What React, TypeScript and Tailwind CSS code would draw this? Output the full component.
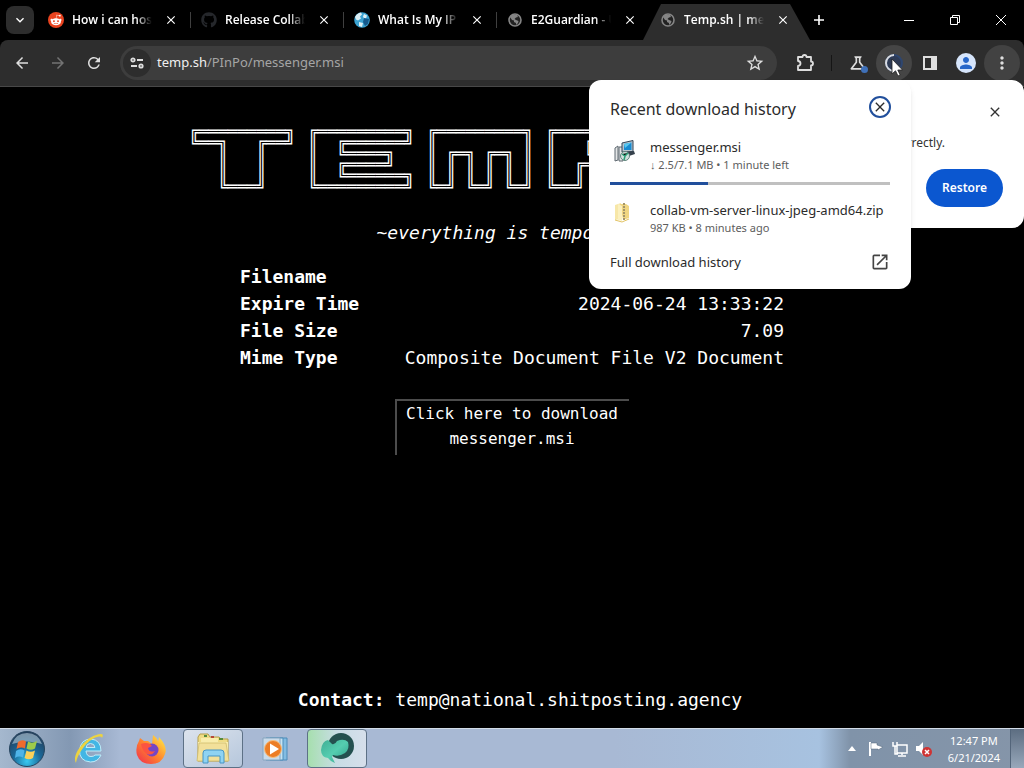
import React from 'react';
import {
  MdArrowBack,
  MdArrowForward,
  MdClose,
  MdKeyboardArrowDown,
  MdMoreVert,
  MdOpenInNew,
  MdOutlineScience,
  MdPerson,
  MdRefresh,
  MdStarBorder,
} from 'react-icons/md';
import { FaGithub, FaRedditAlien } from 'react-icons/fa';

const letters = [
  `╔═════════╗
╚══╗   ╔══╝
   ║   ║
   ║   ║
   ║   ║
   ╚═══╝   `,
  `╔═════════╗
║  ╔══════╝
║  ╚════╗
║  ╔════╝
║  ╚══════╗
╚═════════╝`,
  `╔═════════╗
║         ║
║ ╔═╗ ╔═╗ ║
║ ║ ║ ║ ║ ║
║ ║ ║ ║ ║ ║
╚═╝ ╚═╝ ╚═╝`,
  `╔═════════╗
║   ╔═╗   ║
║   ╚═╝   ║
║  ╔══════╝
║  ║
╚══╝       `,
];

const details = [
  ['Filename', 'messenger.msi'],
  ['Expire Time', '2024-06-24 13:33:22'],
  ['File Size', '7.09'],
  ['Mime Type', 'Composite Document File V2 Document'],
];

function GlobeIcon() {
  return (
    <svg viewBox="0 0 16 16" className="h-4 w-4">
      <circle cx="8" cy="8" r="6" fill="#222" stroke="#858585" strokeWidth="1.6" />
      <path d="M3 5l2 3 2 .5V10l2 1v2l2-2 .5-2L9 8 7.500 7 9 5.500 11 5 10 3 7 2.500 5 3z" fill="#858585" />
    </svg>
  );
}

function EarthIcon() {
  return (
    <svg viewBox="0 0 16 16" className="h-4 w-4">
      <circle cx="8" cy="8" r="7.800" fill="#3ba3d2" />
      <path d="M1 5q2-4 6-4.500l1 2-2 2 1 2-3 2-2-1zM10 2l3 1.500-1 3-2 0-1-2zM5 10l4 1-1 4-3-1z" fill="#dceff4" />
      <path d="M10 6l5 1-1 5-3 2-2-4z" fill="#155a8d" />
    </svg>
  );
}

function RedditIcon() {
  return (
    <span className="flex h-4 w-4 items-center justify-center rounded-full bg-[#e8431f]">
      <FaRedditAlien className="h-3 w-3 text-white" />
    </span>
  );
}

const tabs = [
  { title: 'How i can host a', icon: <RedditIcon /> },
  { title: 'Release CollabVM', icon: <FaGithub className="h-4 w-4 text-[#25272b]" /> },
  { title: 'What Is My IP Address', icon: <EarthIcon /> },
  { title: 'E2Guardian - UCP', icon: <GlobeIcon /> },
  { title: 'Temp.sh | messenger', icon: <GlobeIcon />, active: true },
];

function TabStrip() {
  return (
    <div className="flex h-10 items-center bg-black text-white">
      <button aria-label="Search tabs" className="mr-1 ml-1.5 flex h-7 w-7 shrink-0 items-center justify-center rounded-lg bg-[#2d2d2d]">
        <MdKeyboardArrowDown className="h-4 w-4" />
      </button>
      {tabs.map((tab, i) => (
        <div key={tab.title} className="relative flex h-10 w-[153px] items-center pl-2.5">
          {tab.active && (
            <div className="absolute -inset-x-[7px] top-1 bottom-0 bg-[#2d2d2d] [clip-path:polygon(0_100%,18px_0,calc(100%-20px)_0,100%_100%)]" />
          )}
          {i < 3 && <div className="absolute right-0 h-4 w-px bg-[#3f3f3f]" />}
          <span className="relative shrink-0">{tab.icon}</span>
          <span className="relative ml-2 w-20 overflow-hidden font-['Open_Sans','Noto_Sans',sans-serif] text-xs font-semibold whitespace-nowrap [mask-image:linear-gradient(to_right,#000_80%,transparent)]">
            {tab.title}
          </span>
          <button aria-label={'Close ' + tab.title} className="relative ml-3">
            <MdClose className="h-3.5 w-3.5" />
          </button>
        </div>
      ))}
      <button aria-label="New tab" className="ml-0.5 flex h-7 w-7 items-center justify-center">
        <svg viewBox="0 0 12 12" className="h-3 w-3" stroke="#fff" strokeWidth="1.600">
          <path d="M6 1v10M1 6h10" />
        </svg>
      </button>
      <div className="ml-auto flex h-10">
        <button aria-label="Minimize" className="flex w-[46px] items-center justify-center">
          <svg viewBox="0 0 12 12" className="h-3 w-3" stroke="#fff">
            <path d="M1 6.500h10" />
          </svg>
        </button>
        <button aria-label="Restore window" className="flex w-[46px] items-center justify-center">
          <svg viewBox="0 0 12 12" className="h-3 w-3" fill="none" stroke="#fff">
            <path d="M1.500 3.500h7v7h-7zM3.500 3.500v-2h7v7h-2" />
          </svg>
        </button>
        <button aria-label="Close window" className="flex w-[46px] items-center justify-center">
          <svg viewBox="0 0 12 12" className="h-3 w-3" stroke="#fff">
            <path d="M1 1l10 10M11 1L1 11" />
          </svg>
        </button>
      </div>
    </div>
  );
}

function Toolbar() {
  const iconButton = 'flex h-9 w-9 shrink-0 items-center justify-center';
  return (
    <div className="relative bg-black">
      <div className="flex h-[46px] items-center rounded-t-lg bg-[#2d2d2d] px-1 text-[#dedede]">
        <button aria-label="Back" className={iconButton}><MdArrowBack className="h-[18px] w-[18px]" /></button>
        <button aria-label="Forward" className={iconButton}><MdArrowForward className="h-[18px] w-[18px] text-[#737373]" /></button>
        <button aria-label="Reload" className={iconButton}><MdRefresh className="h-[18px] w-[18px]" /></button>
        <div className="mr-2.5 ml-2 flex h-[34px] min-w-0 flex-1 items-center rounded-full bg-[#3d3d3d] pr-3 pl-[3px]">
          <button aria-label="Site information" className="mr-1.5 flex h-7 w-7 shrink-0 items-center justify-center rounded-full bg-[#2d2d2d]">
            <svg viewBox="0 0 14 12" className="h-3 w-3.5" fill="none" stroke="#dedede" strokeWidth="1.800">
              <circle cx="3" cy="3" r="1.700" />
              <path d="M7 3h6M1 9h6" />
              <circle cx="11" cy="9" r="1.700" />
            </svg>
          </button>
          <a href="https://temp.sh/PInPo/messenger.msi" className="flex-1 text-[13px] text-[#a5a5a5]">
            <span className="text-[#f0f0f0]">temp.sh</span>/PInPo/messenger.msi
          </a>
          <button aria-label="Bookmark this tab"><MdStarBorder className="h-5 w-5" /></button>
        </div>
        <button aria-label="Extensions" className={iconButton}>
          <svg viewBox="0 0 20 20" className="h-5 w-5" fill="none" stroke="#dedede" strokeWidth="1.800" strokeLinejoin="round">
            <path d="M3 4h4.500q0-2 2-2t2 2H16v4.500q2 0 2 2t-2 2V17H3v-4q2.500-.3 2.500-2.500T3 8z" />
          </svg>
        </button>
        <div className="mx-2 h-4 w-px bg-[#151515]" />
        <button aria-label="Labs" className={iconButton + ' relative'}>
          <MdOutlineScience className="h-5 w-5" />
          <span className="absolute right-2 bottom-2 h-[7px] w-[7px] rounded-full bg-[#3f70b8]" />
        </button>
        <button aria-label="Downloads" className={iconButton + ' rounded-full bg-[#454545]'}>
          <svg viewBox="0 0 20 20" className="h-5 w-5" fill="none" strokeWidth="2">
            <circle cx="10" cy="10" r="8" fill="#2e3b55" stroke="#2e4670" />
            <path d="M10 18A8 8 0 0 1 10 2" stroke="#d9dce2" />
          </svg>
        </button>
        <button aria-label="Side panel" className={iconButton}>
          <svg viewBox="0 0 16 16" className="h-4 w-4">
            <path d="M2 2h12v12H2z" fill="none" stroke="#dedede" strokeWidth="2" />
            <path d="M9 2h5v12H9z" fill="#dedede" />
          </svg>
        </button>
        <button aria-label="Profile" className={iconButton}>
          <span className="flex h-5 w-5 items-center justify-center rounded-full bg-[#d6e5fb]">
            <MdPerson className="h-[18px] w-[18px] text-[#2666c9]" />
          </span>
        </button>
        <button aria-label="Menu" className={iconButton + ' rounded-full bg-[#424242]'}><MdMoreVert className="h-5 w-5" /></button>
      </div>
      <div className="h-px bg-[#484848]" />
      <RestoreBubble />
      <DownloadBubble />
      {/* Mouse pointer */}
      <svg viewBox="0 0 12 19" className="absolute top-[18px] right-[121px] h-[19px] w-3">
        <path d="M1 1v15l3.500-3.200L7 18l2.200-1-2.400-5H11.500z" fill="#fff" stroke="#222" strokeWidth=".8" />
      </svg>
    </div>
  );
}

function RestoreBubble() {
  return (
    <section aria-label="Restore pages" className="absolute top-10 right-0 flex h-[148px] w-80 flex-col items-end rounded-xl bg-white px-[21px] py-6 text-[#333] shadow-lg">
      <button aria-label="Dismiss"><MdClose className="h-4 w-4" /></button>
      <p className="mt-[13px] mr-[58px] text-xs leading-5 whitespace-nowrap">Chrome didn't shut down correctly.</p>
      <button className="mt-4 h-[38px] shrink-0 rounded-full bg-[#0b57d0] px-4 text-xs font-semibold text-white">
        Restore
      </button>
    </section>
  );
}

function MsiIcon() {
  return (
    <svg viewBox="0 0 22 22" className="h-[22px] w-[22px]">
      <path d="M1 8l3-2v14l-3 1zM5 7h4v14H5z" fill="#e3e5e6" stroke="#5e6870" />
      <path d="M8 3l11-2.500v11L8 12z" fill="#b9c4ce" stroke="#304456" />
      <path d="M10 4l7.500-1.500v7.500L10 10z" fill="#188bd1" />
      <path d="M10 4l7.500-1.500L11 8z" fill="#59c8ef" />
      <path d="M12 12l8-1 1 3-6 2z" fill="#35404b" />
      <circle cx="11" cy="16" r="4.500" fill="#cfe0dc" stroke="#61837c" />
      <path d="M8 14l3 2 3-3M11 16l-1 4" stroke="#2b9e76" strokeWidth="1.500" />
    </svg>
  );
}

function ZipIcon() {
  return (
    <svg viewBox="0 0 20 22" className="h-[22px] w-5">
      <path d="M3 4l6-2v16l-6 1z" fill="#f7e7a8" />
      <path d="M8 3h6l3 2v12l-6 2z" fill="#f0d682" />
      <path d="M6 3l4 2v15l-4-1z" fill="#fbf0bf" />
      <path d="M12 2v17" stroke="#a4966a" strokeWidth="2" strokeDasharray="2 1" />
      <path d="M3 19l7 2 7-3" stroke="#e2c364" fill="none" />
    </svg>
  );
}

function DownloadBubble() {
  return (
    <section className="absolute top-10 right-[113px] h-[209px] w-[322px] rounded-xl bg-white px-5 pt-4 text-[#2b2b2b] shadow-md">
      <div className="flex h-[22px] items-start justify-between pl-px">
        <h2 className="pt-0.5 text-base leading-[22px]">Recent download history</h2>
        <button aria-label="Close" className="flex h-[22px] w-[22px] items-center justify-center rounded-full border-2 border-[#214f9c]">
          <MdClose className="h-4 w-4" />
        </button>
      </div>
      <div className="mt-5 flex gap-4 pl-px">
        <div className="w-6 pt-0.5 pl-1"><MsiIcon /></div>
        <div>
          <p className="text-[13px] leading-[18px]">messenger.msi</p>
          <p className="text-[11px] leading-[18px] text-[#5d5d5d]">↓ 2.5/7.1 MB • 1 minute left</p>
        </div>
      </div>
      <div className="mx-px mt-2 h-[3px] bg-[#c0c0c0]">
        <div className="h-[3px] w-[35%] bg-[#214f9c]" />
      </div>
      <div className="mt-4 flex gap-4 pl-px">
        <div className="w-6 pl-0.5"><ZipIcon /></div>
        <div className="whitespace-nowrap">
          <p className="text-[13px] leading-[18px]">collab-vm-server-linux-jpeg-amd64.zip</p>
          <p className="text-[11px] leading-[18px] text-[#5d5d5d]">987 KB • 8 minutes ago</p>
        </div>
      </div>
      <a href="#history" className="mx-px mt-[13px] flex items-center justify-between text-[13px] leading-6">
        Full download history
        <MdOpenInNew className="h-5 w-5 text-[#444]" />
      </a>
    </section>
  );
}

function TempPage() {
  return (
    <main className="flex flex-1 flex-col items-center bg-black pt-[39px] font-['DejaVu_Sans_Mono','Liberation_Mono',monospace] text-lg text-white">
      <div aria-label="Temp" className="flex w-full max-w-[650px] gap-[13px] pl-0.5">
        {letters.map((letter) => (
          <pre key={letter} className="font-['DejaVu_Sans_Mono',monospace] text-base leading-[11px]">
            {/* Rows are clipped so the tall box strokes stop at their corners */}
            {letter.split('\n').map((row, i) => (
              <span key={i} className="block h-[11px] overflow-hidden">{row}</span>
            ))}
          </pre>
        ))}
      </div>
      <p className="mt-[27px] leading-[27px] italic">~everything is temporary~</p>
      <table className="mt-[17px] w-[544px] leading-[27px]">
        <tbody>
          {details.map(([name, value]) => (
            <tr key={name}>
              <th scope="row" className="text-left font-bold">{name}</th>
              <td className="text-right">{value}</td>
            </tr>
          ))}
        </tbody>
      </table>
      <button className="mt-7 w-[234px] border-t-2 border-l-2 border-[#4c4c4c] pr-0.5 pb-1 text-base leading-[25px]">
        Click here to download messenger.msi
      </button>
      <p className="mt-auto mb-[15px] pl-4 leading-[27px]">
        <b>Contact:</b> temp@national.shitposting.agency
      </p>
    </main>
  );
}

function StartIcon() {
  return (
    <svg viewBox="0 0 38 38" className="h-[38px] w-[38px]">
      <defs>
        <radialGradient id="orb" cx="50%" cy="85%" r="80%">
          <stop offset="0" stopColor="#38c9f1" />
          <stop offset=".5" stopColor="#1a6797" />
          <stop offset="1" stopColor="#233f5c" />
        </radialGradient>
      </defs>
      <circle cx="19" cy="19" r="17.500" fill="url(#orb)" stroke="#27455f" />
      <path d="M4 14Q8 3 19 3t15 11q-15-5-30 0z" fill="#c4dae7" opacity=".55" />
      <path d="M10 12q4-3 8-.5L17 18.500q-4-2-8.500.5z" fill="#ef6b2d" />
      <path d="M20 11.500q4 2.500 9-.5l-2 7.500q-4 2.500-8.500 0z" fill="#9dcb4a" />
      <path d="M8 21q4-3 8.500-.5L15 27.500q-4-2-8 .5z" fill="#4fb4e9" />
      <path d="M18.500 20.500q4 2.500 8.500 0L25 28q-4 2.500-8.500 0z" fill="#fad15a" />
    </svg>
  );
}

function ExplorerIcon() {
  return (
    <svg viewBox="0 0 34 34" className="h-[34px] w-[34px]">
      <path
        d="M29 23q-3 7-10.500 7Q7 29 7.500 18 9 7 19 7q10 1 10 12H14q.5 5.500 5 5.500 3 0 4-1.500zM14 15.500h9q-.5-4-4.500-4t-4.500 4z"
        fill="#43b6e4"
        stroke="#c0edf9"
      />
      <path d="M4 31C-1 23 14 3 29 2q3 0 1 4 0-2-3-1.500C17 6 6 20 4 31z" fill="#edd340" />
    </svg>
  );
}

function FirefoxIcon() {
  return (
    <svg viewBox="0 0 32 32" className="h-8 w-8">
      <defs>
        <linearGradient id="fox" x1="1" y1="0" x2="0" y2="1">
          <stop offset=".1" stopColor="#ffe145" />
          <stop offset=".5" stopColor="#ff862d" />
          <stop offset="1" stopColor="#f1284f" />
        </linearGradient>
      </defs>
      <path d="M4 8l1-3 4 3h4l4 3 1-9q3 2 5 6 1-2 1-4 9 10 6 17-3 10-14 10T2 22Q0 14 4 8z" fill="url(#fox)" />
      <circle cx="17" cy="17" r="6.500" fill="#7545c4" />
      <path d="M6 11q5-2 9 0l2 2-4 2q1 5 7 3-3 5-8 3-5-3-6-10z" fill="#fc5440" />
    </svg>
  );
}

function FolderIcon() {
  return (
    <svg viewBox="0 0 36 34" className="h-[34px] w-9">
      <path d="M3 5l2-3h8l2 3h9l2 2h7v22H3z" fill="#efdc85" stroke="#b59d49" />
      <path d="M6 6h17v4h10v18H3V10h3z" fill="#f9edac" />
      <path d="M4 11h27l3 18H2z" fill="#f2e09a" stroke="#cdb764" strokeWidth=".7" />
      <path d="M9 4h3M24 7h4" stroke="#578c3a" strokeWidth="2" />
      <path d="M16 5h3" stroke="#b5483a" strokeWidth="2" />
      <path d="M8 31V21q0-3 3-3h15q3 0 3 3v10h-4v-7H13v7z" fill="#8fd3f2" stroke="#4695c5" />
    </svg>
  );
}

function PlayerIcon() {
  return (
    <svg viewBox="0 0 28 28" className="h-7 w-7">
      <path d="M9 3h17v22H9z" fill="#83bce2" stroke="#4d8cb9" />
      <path d="M5 3h17v22H5z" fill="#c4e3f3" stroke="#4d8cb9" />
      <path d="M2 3h17v22H2z" fill="#c9dbea" stroke="#87a6bf" />
      <circle cx="12" cy="14" r="8.500" fill="#ec7d25" stroke="#f6bd7d" />
      <path d="M9 8.500v11l9-5.500z" fill="#fff" />
    </svg>
  );
}

function SwirlIcon() {
  return (
    <svg viewBox="0 0 36 34" className="h-[34px] w-9">
      <defs>
        <linearGradient id="swirl" x1="0" y1="0" x2="1" y2="1">
          <stop offset="0" stopColor="#3fae94" />
          <stop offset=".5" stopColor="#55cdb0" />
          <stop offset="1" stopColor="#2c9c88" />
        </linearGradient>
      </defs>
      <ellipse cx="22" cy="14" rx="13" ry="13" fill="#24504f" />
      <path d="M2 18Q3 9 9 8l4 4q3 1 5-3 7-3 11 1 2 7-3 11-6 4-12 2l-1 2 3 6q-5-2-7-5-7-1-7-8z" fill="url(#swirl)" />
    </svg>
  );
}

function Taskbar() {
  return (
    <footer className="flex h-10 shrink-0 items-center border-t border-[#d2dce8] bg-[linear-gradient(90deg,#a5b8ce_0,#8398b3_70px,#a8b9d4_120px,#a8b9d4_60%,#a7c2e0_80%,#8093a9_83%,#8595a9_100%)] text-white">
      <button aria-label="Start" className="ml-2 w-[38px]"><StartIcon /></button>
      <button aria-label="Internet Explorer" className="ml-3 flex w-[62px] justify-center"><ExplorerIcon /></button>
      <button aria-label="Firefox" className="mr-px flex w-[62px] justify-center"><FirefoxIcon /></button>
      <button aria-label="Windows Explorer" className="flex h-[39px] w-[60px] items-center justify-center rounded-sm border border-[#5d7186] bg-gradient-to-br from-[#dce3ed] to-[#b6c7dc]">
        <FolderIcon />
      </button>
      <button aria-label="Media Player" className="flex w-[64px] justify-center"><PlayerIcon /></button>
      <button aria-label="Browser" className="flex h-[39px] w-[60px] items-center justify-center rounded-sm border border-[#5d7186] bg-gradient-to-r from-[#a6dfae] via-[#c8dce5] to-[#d6dfeb]">
        <SwirlIcon />
      </button>
      <div className="ml-auto flex h-full items-center">
        <button aria-label="Show hidden icons" className="mr-3">
          <svg viewBox="0 0 8 5" className="h-[5px] w-2"><path d="M0 5l4-5 4 5z" fill="#fff" /></svg>
        </button>
        <svg viewBox="0 0 16 16" className="mr-2 h-4 w-4">
          <path d="M2 1v14" stroke="#fff" strokeWidth="2" />
          <path d="M3 2h6v2l6 2-5 3V8H3z" fill="#fff" stroke="#51657a" strokeWidth=".5" />
        </svg>
        <svg viewBox="0 0 16 16" className="mr-2 h-4 w-4" fill="none" stroke="#fff" strokeWidth="1.500">
          <path d="M5 4h10v8H5zM10 12v2M6 15h8M1 1v4h4V1M3 5v8h3" />
        </svg>
        <svg viewBox="0 0 16 16" className="mr-4 h-4 w-4">
          <path d="M0 5h3l4-4v13l-4-4H0z" fill="#fff" />
          <circle cx="11" cy="11" r="5" fill="#cf3434" />
          <path d="M9 9l4 4M13 9l-4 4" stroke="#fff" strokeWidth="1.500" />
        </svg>
        <div className="mr-2.5 text-center text-[11px] leading-[17px]">
          <p>12:47 PM</p>
          <p>6/21/2024</p>
        </div>
        <button aria-label="Show desktop" className="h-full w-3.5 border-l border-[#53657a] bg-gradient-to-b from-[#5c6d81] to-[#98a8bb]" />
      </div>
    </footer>
  );
}

export default function App() {
  return (
    <div className="flex min-h-screen flex-col bg-black font-['Noto_Sans','Open_Sans',sans-serif]">
      <TabStrip />
      <Toolbar />
      <TempPage />
      <Taskbar />
    </div>
  );
}
